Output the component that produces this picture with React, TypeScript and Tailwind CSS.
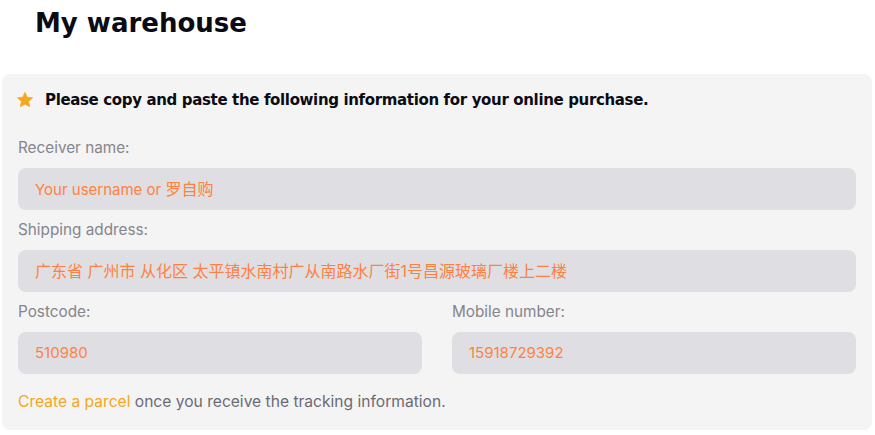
import React from 'react';

const body = { fontFamily: 'Inter, "Noto Sans CJK SC", sans-serif' };
const heading = { fontFamily: '"DejaVu Sans", "Noto Sans CJK SC", sans-serif' };

const Field = ({ label, children, className = '' }: { label: string; children: React.ReactNode; className?: string }) => (
  <div className={`flex flex-col ${className}`}>
    <label className="text-[15.3px] leading-5 text-[#85858d]">{label}</label>
    <div className="mt-[10px] h-[42px] rounded-lg bg-[#dfdfe3] px-[17px] flex items-center text-[15px] text-[#ff8142]">
      {children}
    </div>
  </div>
);

const StarIcon = () => (
  <svg width="18" height="18" viewBox="0 0 24 24" className="shrink-0 -ml-[2px]">
    <path
      d="M12 1.8l3 6.5 7.1.8-5.3 4.85 1.45 7L12 17.4l-6.25 3.55 1.45-7L1.9 9.1l7.1-.8z"
      fill="#f5a623"
      stroke="#f5a623"
      strokeWidth="1"
      strokeLinejoin="round"
    />
  </svg>
);

export default function App() {
  return (
    <div className="w-[875px] h-[435px] bg-white overflow-hidden" style={body}>
      <h1 className="pl-[35px] pt-[5px] h-[74px] text-[26px] font-bold text-[#0b0b14] leading-[36px]" style={heading}>
        My warehouse
      </h1>
      <div className="mx-[2px] w-[870px] rounded-lg bg-[#f4f4f4] px-4 pt-4 pb-[18px]">
        <div className="flex items-center gap-[11px] h-5">
          <StarIcon />
          <span className="text-[15px] font-bold text-[#0b0b14] tracking-[-0.35px]" style={heading}>
            Please copy and paste the following information for your online purchase.
          </span>
        </div>
        <Field label="Receiver name:" className="mt-[28px]">
          <span>
            Your username or <span className="text-[16px]">罗自购</span>
          </span>
        </Field>
        <Field label="Shipping address:" className="mt-[10px]">
          <span className="text-[16px]">广东省 广州市 从化区 太平镇水南村广从南路水厂街1号昌源玻璃厂楼上二楼</span>
        </Field>
        <div className="mt-[10px] grid grid-cols-2 gap-[30px]">
          <Field label="Postcode:">510980</Field>
          <Field label="Mobile number:">15918729392</Field>
        </div>
        <p className="mt-[18px] text-[15.6px] leading-5 text-[#6b6b75]">
          <span className="text-[#f5a623]">Create a parcel</span> once you receive the tracking information.
        </p>
      </div>
    </div>
  );
}
